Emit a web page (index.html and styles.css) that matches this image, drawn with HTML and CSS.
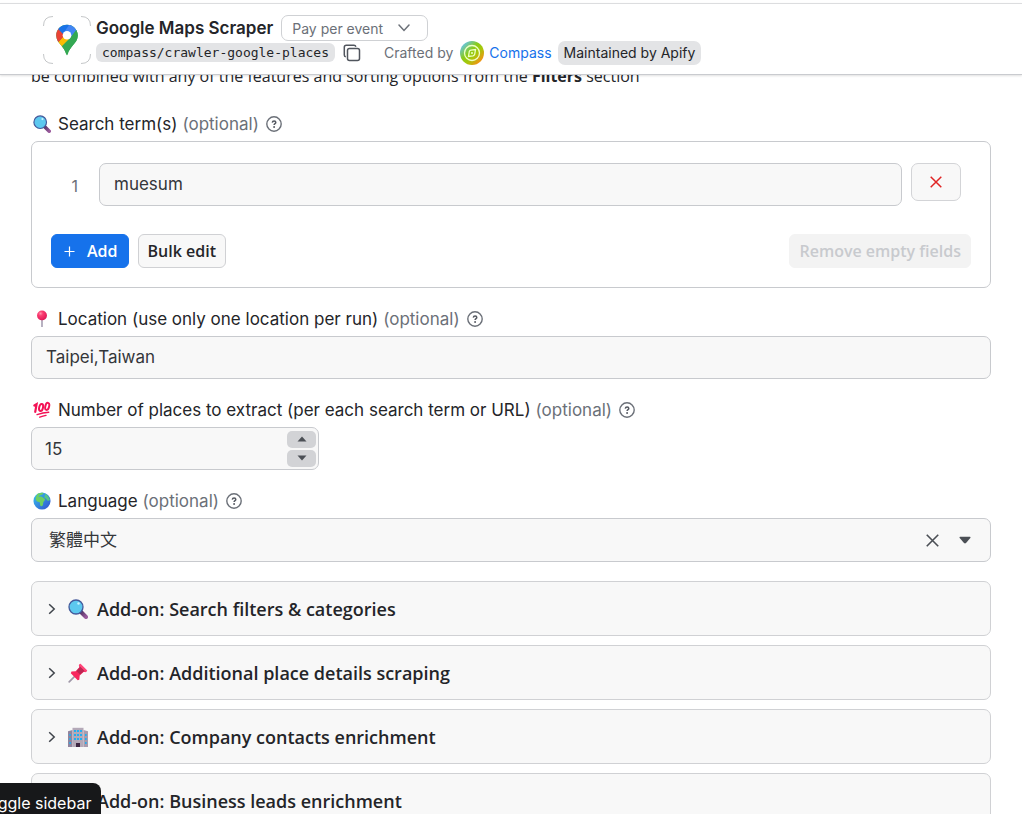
FILE: index.html
```html
<!DOCTYPE html>
<html lang="en">
<head>
<meta charset="utf-8">
<meta name="viewport" content="width=device-width, initial-scale=1">
<title>Google Maps Scraper</title>
<link rel="stylesheet" href="styles.css">
</head>
<body>
<svg class="sprite" aria-hidden="true">
  <defs>
    <linearGradient id="handle" x1="0" y1="0" x2="1" y2="1"><stop offset="0" stop-color="#533566"/><stop offset="1" stop-color="#9a5a9c"/></linearGradient>
    <linearGradient id="earth" x1="0" y1="0" x2="1" y2="1"><stop offset="0" stop-color="#35c4ee"/><stop offset="1" stop-color="#3450cf"/></linearGradient>
    <linearGradient id="brand" x1="0" y1="0" x2="1" y2="1"><stop offset="0.1" stop-color="#62c4f5"/><stop offset="0.42" stop-color="#8acb18"/><stop offset="0.6" stop-color="#a5c80a"/><stop offset="0.9" stop-color="#ff8a16"/></linearGradient>
    <radialGradient id="ball" cx="0.35" cy="0.3" r="0.7"><stop offset="0" stop-color="#ff8fab"/><stop offset="0.35" stop-color="#fb3c70"/><stop offset="1" stop-color="#e01a58"/></radialGradient>
  </defs>
  <symbol id="magnifier" viewBox="0 0 20 20">
    <path d="M13 13 18 18" stroke="url(#handle)" stroke-width="4" stroke-linecap="round"/>
    <circle cx="8" cy="8" r="7" fill="#5cc8ef" stroke="#44599b" stroke-width="1.3"/>
    <circle cx="10.5" cy="4.5" r="1.2" fill="#c5f3ff"/>
  </symbol>
  <symbol id="help" viewBox="0 0 16 16">
    <circle cx="8" cy="8" r="7.2" fill="none" stroke="#6b7078" stroke-width="1.4"/>
    <path d="M6.3 6.6C6.4 5.4 7.1 4.9 8.1 4.9S9.8 5.5 9.8 6.5C9.8 7.7 8.1 7.7 8.1 9" fill="none" stroke="#555961" stroke-width="1.5"/>
    <circle cx="8.1" cy="11" r="0.95" fill="#555961"/>
  </symbol>
  <symbol id="chevron" viewBox="0 0 8 12"><path d="M1.2 1.2 6.2 6 1.2 10.8" fill="none" stroke="#3f444b" stroke-width="1.5"/></symbol>
  <symbol id="cross" viewBox="0 0 12 12"><path d="M.7.7 11.3 11.3M11.3.7.7 11.3" fill="none" stroke="currentColor" stroke-width="1.5"/></symbol>
  <symbol id="pushpin" viewBox="0 0 20 20">
    <path d="M8 12 1.2 18.8" stroke="#9f98a8" stroke-width="1.7" stroke-linecap="round"/>
    <path d="M12.2.8 19.2 7.8 17.5 9.2 15.8 8.8 11.7 12.5 11.3 16.8 9.7 17.3 2.8 10.3 3.5 8.5 7.7 8.2 11.4 4.3 10.8 2.3Z" fill="#f8275f"/>
    <path d="M12.3 3.6 16.6 7.7 12 11.6 8.5 8.1Z" fill="#bd2653"/>
    <path d="M10.9 2.2 12.4.8 19.2 7.6 17.8 9.1Z" fill="#ff4679"/>
  </symbol>
  <symbol id="office" viewBox="0 0 20 20">
    <path d="M0 4.2 4.5 3V20H0Z" fill="#91859f"/><path d="M15.5 3 20 4.2V20H15.5Z" fill="#a99cad"/>
    <path d="M4.5.8H15.5V20H4.5Z" fill="#b4a9b8"/>
    <path d="M6 3h2v2H6zM9 3h2v2H9zM12 3h2v2H12zM6 7h2v2H6zM9 7h2v2H9zM12 7h2v2H12zM6 11h2v2H6zM9 11h2v2H9zM12 11h2v2H12zM1.3 7h1.6v2H1.3zM1.3 11h1.6v2H1.3zM1.3 15h1.6v2H1.3zM17 7h1.6v2H17zM17 11h1.6v2H17zM17 15h1.6v2H17z" fill="#22aef0"/>
    <path d="M8 16h4v4H8z" fill="#3d2742"/>
  </symbol>
</svg>

<header class="topbar">
  <svg class="logo" viewBox="0 0 48 48" aria-hidden="true">
    <path d="M.5 10Q.5.5 10 .5M38 .5Q47.500.5 47.500 10M47.500 38Q47.500 47.500 38 47.500M10 47.500Q.5 47.500.5 38" fill="none" stroke="#b5b7ba" stroke-width="0.8"/>
    <clipPath id="pin"><path d="M24 8.800C18.100 8.800 13.200 13.500 13.200 19.400 13.200 23.500 15.500 26.200 18.500 29.800 21 33 22.300 35.300 23.200 38.300Q24 40.200 24.800 38.300C25.700 35.300 27 33 29.500 29.800 32.500 26.200 34.800 23.500 34.800 19.400 34.800 13.500 29.900 8.800 24 8.800Z"/></clipPath>
    <g clip-path="url(#pin)">
      <path d="M10 5H38V42H10Z" fill="#34a853"/>
      <path d="M12 30 24 16 30 21 18.500 33 12 34Z" fill="#fbbc04"/>
      <path d="M10 8 24 17 13.500 28 10 29Z" fill="#ea4335"/>
      <path d="M14 12 16 5 30 8 20.500 18.500Z" fill="#1a73e8"/>
      <path d="M27.500 7 38 12 27 24 20.500 17Z" fill="#4285f4"/>
      <path d="M34 13 38 13 38 24 20 40 18 31 27 22Z" fill="#34a853"/>
    </g>
    <circle cx="24" cy="19.300" r="4.300" fill="#fff"/>
  </svg>
  <div class="heading">
    <div class="title-row">
      <h1 class="title">Google Maps Scraper</h1>
      <button class="pricing" type="button">Pay per event
        <svg width="12" height="8" viewBox="0 0 12 8" aria-hidden="true"><path d="M1 1 6 6.500 11 1" fill="none" stroke="#6b7078" stroke-width="1.500" stroke-linecap="round"/></svg>
      </button>
    </div>
    <div class="meta-row">
      <code class="slug">compass/crawler-google-places</code>
      <button class="copy" type="button" aria-label="Copy actor name">
        <svg width="18" height="18" viewBox="0 0 18 18" fill="none" stroke="#50555d" stroke-width="1.500" aria-hidden="true"><rect x="4.500" y="4.500" width="12" height="12" rx="2"/><path d="M2.800 12.800Q1.300 12.500 1.300 11V3.300Q1.300 1.300 3.300 1.300H11Q12.500 1.300 12.900 2.700"/></svg>
      </button>
      <span class="crafted">Crafted by</span>
      <svg class="avatar" viewBox="0 0 24 24" aria-hidden="true"><circle cx="12" cy="12" r="12" fill="url(#brand)"/><g fill="none" stroke="#efffc7"><circle cx="12" cy="12" r="7.500" stroke-width="1.300"/><path d="M8.500 15.500 9.300 10.500Q9.700 9.400 11 9.200L15.500 8.500 14.700 13.300Q14.300 14.500 13 14.800Z" stroke-width="1.300"/><circle cx="12" cy="12" r=".7"/></g></svg>
      <a class="author" href="#compass">Compass</a>
      <span class="badge">Maintained by Apify</span>
    </div>
  </div>
</header>

<main class="content">
  <p class="intro">be combined with any of the features and sorting options from the <strong>Filters</strong> section</p>

  <section class="field">
    <div class="label-row">
      <svg class="emoji" aria-hidden="true"><use href="#magnifier"/></svg>
      <label for="term">Search term(s)</label><span class="optional">(optional)</span>
      <button class="help" type="button" aria-label="About search terms"><svg width="16" height="16"><use href="#help"/></svg></button>
    </div>
    <div class="panel">
      <div class="term-row">
        <span class="index">1</span>
        <input class="box text" id="term" type="text" value="muesum">
        <button class="remove" type="button" aria-label="Remove term"><svg width="12" height="12"><use href="#cross"/></svg></button>
      </div>
      <div class="actions">
        <button class="btn primary" type="button"><svg width="11" height="11" viewBox="0 0 11 11" aria-hidden="true"><path d="M5.500.5V10.500M.5 5.500H10.500" stroke="#fff" stroke-width="1.200"/></svg>Add</button>
        <button class="btn" type="button">Bulk edit</button>
        <button class="btn clear-empty" type="button" disabled>Remove empty fields</button>
      </div>
    </div>
  </section>

  <section class="field">
    <div class="label-row">
      <svg class="emoji" viewBox="0 0 20 20" aria-hidden="true"><path d="M10 10V19" stroke="#958ca3" stroke-width="1.500"/><circle cx="10" cy="6" r="5.500" fill="url(#ball)"/></svg>
      <label for="location">Location (use only one location per run)</label><span class="optional">(optional)</span>
      <button class="help" type="button" aria-label="About location"><svg width="16" height="16"><use href="#help"/></svg></button>
    </div>
    <input class="box text" id="location" type="text" value="Taipei,Taiwan">
  </section>

  <section class="field">
    <div class="label-row">
      <svg class="emoji" viewBox="0 0 20 20" fill="none" stroke="#f31255" stroke-linecap="round" aria-hidden="true"><path d="M1.500 5 4 3.500 2.500 12" stroke-width="2.400"/><ellipse cx="9" cy="7.200" rx="2.100" ry="4" transform="rotate(14 9 7.200)" stroke-width="2.200"/><ellipse cx="15.800" cy="6" rx="2.100" ry="4" transform="rotate(14 15.800 6)" stroke-width="2.200"/><path d="M4.500 15.200Q11 13 17.500 12.500M7.500 18Q11 16.500 14.500 16" stroke-width="1.500"/></svg>
      <label for="count">Number of places to extract (per each search term or URL)</label><span class="optional">(optional)</span>
      <button class="help" type="button" aria-label="About number of places"><svg width="16" height="16"><use href="#help"/></svg></button>
    </div>
    <div class="box stepper">
      <input id="count" class="bare" type="number" value="15">
      <div class="steps">
        <button class="step" type="button" aria-label="Increase"><svg width="10" height="6" viewBox="0 0 10 6"><path d="M5 .5 9.500 5.500H.5Z" fill="#4b4f55"/></svg></button>
        <button class="step" type="button" aria-label="Decrease"><svg width="10" height="6" viewBox="0 0 10 6"><path d="M5 5.500 9.500.5H.5Z" fill="#4b4f55"/></svg></button>
      </div>
    </div>
  </section>

  <section class="field">
    <div class="label-row">
      <svg class="emoji" viewBox="0 0 20 20" aria-hidden="true"><circle cx="10" cy="10" r="9.500" fill="url(#earth)"/><path d="M5 2Q9 .5 12 1L10 3 7.500 3.500 6 5.500Q9 4.500 11 6L13.500 8Q13 10 11.500 11L11 14.500Q9.500 17 8 15L7.500 11.500Q4 11 3 8.500 3 5 5 2Z" fill="#6ecf62"/><path d="M14 2Q18 4.500 19 9L16.500 10 14.500 7.500 12.500 6 13 4Z" fill="#54c58a"/></svg>
      <label for="language">Language</label><span class="optional">(optional)</span>
      <button class="help" type="button" aria-label="About language"><svg width="16" height="16"><use href="#help"/></svg></button>
    </div>
    <div class="box picker">
      <select id="language" class="bare"><option lang="zh-Hant">繁體中文</option></select>
      <button class="icon-btn" type="button" aria-label="Clear language"><svg width="13" height="13"><use href="#cross"/></svg></button>
      <svg width="12" height="8" viewBox="0 0 12 8" aria-hidden="true"><path d="M1 .8H11Q12 1 11.300 2L7 7Q6 7.800 5 7L.7 2Q0 1 1 .8Z" fill="#4b4f55"/></svg>
    </div>
  </section>

  <div class="addons">
    <button class="addon" type="button"><svg class="caret" aria-hidden="true"><use href="#chevron"/></svg><svg class="addon-icon" aria-hidden="true"><use href="#magnifier"/></svg>Add-on: Search filters &amp; categories</button>
    <button class="addon" type="button"><svg class="caret" aria-hidden="true"><use href="#chevron"/></svg><svg class="addon-icon" aria-hidden="true"><use href="#pushpin"/></svg>Add-on: Additional place details scraping</button>
    <button class="addon" type="button"><svg class="caret" aria-hidden="true"><use href="#chevron"/></svg><svg class="addon-icon" aria-hidden="true"><use href="#office"/></svg>Add-on: Company contacts enrichment</button>
    <button class="addon" type="button"><svg class="caret" aria-hidden="true"><use href="#chevron"/></svg><svg class="addon-icon" aria-hidden="true"><use href="#office"/></svg>Add-on: Business leads enrichment</button>
  </div>
</main>

<div class="tooltip" role="tooltip">Toggle sidebar</div>
</body>
</html>
```
FILE: styles.css
```css
* { box-sizing: border-box; }

body {
  margin: 0;
  height: 100vh;
  overflow: hidden;
  display: flex;
  flex-direction: column;
  background: #fff;
  color: #242529;
  font-family: Inter, "Noto Sans CJK TC", sans-serif;
  font-size: 17px;
}

button, input, select { font: inherit; color: inherit; margin: 0; }
button { display: flex; align-items: center; justify-content: center; cursor: pointer; }
svg { flex: none; }
.sprite { position: absolute; width: 0; height: 0; }

/* Top bar */
.topbar {
  flex: none;
  display: flex;
  gap: 5px;
  margin-top: 3px;
  padding: 12px 43px 9px;
  border-top: 1px solid #dcdddf;
  border-bottom: 1px solid #c9cbcf;
  box-shadow: 0 1px 2px rgba(0, 0, 0, 0.12);
  background: #fff;
  z-index: 1;
}
.logo { width: 48px; height: 48px; }
.heading { display: flex; flex-direction: column; white-space: nowrap; }
.title-row { display: flex; align-items: center; gap: 8px; height: 24px; }
.title { margin: 0; font-size: 17px; font-weight: 600; line-height: 24px; }
.pricing {
  gap: 15px;
  height: 26px;
  padding: 0 17px 0 10px;
  border: 1px solid #cfd1d4;
  border-radius: 7px;
  background: #fff;
  color: #6b7078;
  font-size: 14px;
}
.meta-row { display: flex; align-items: center; height: 25px; font-size: 14px; }
.slug {
  padding: 0 6px;
  border-radius: 6px;
  background: #e3e4e6;
  font-family: "DejaVu Sans Mono", monospace;
  font-size: 13px;
  line-height: 19px;
}
.copy { margin: 0 23px 0 8px; padding: 0; border: 0; background: none; }
.crafted { color: #6b7078; }
.avatar { width: 24px; height: 24px; margin: 0 5px 0 7px; }
.author { margin-right: 6px; color: #1672eb; text-decoration: none; }
.badge { padding: 0 6px; border-radius: 7px; background: #e3e4e6; line-height: 24px; }

/* Form */
.content { flex: 1; min-height: 0; overflow: hidden; padding: 0 31px; }
.intro {
  margin: -11px 0 24px;
  font-family: "Open Sans", sans-serif;
  font-size: 16px;
  line-height: 24px;
}
.field { margin-bottom: 19px; }
.label-row { display: flex; align-items: center; height: 24px; margin-bottom: 5px; padding-left: 2px; white-space: nowrap; }
.emoji { width: 18px; height: 18px; margin-right: 7px; }
.optional { margin-left: 5px; color: #6b7078; }
.help { margin-left: 7px; padding: 0; border: 0; background: none; }

.box {
  width: 100%;
  height: 43px;
  border: 1px solid #c8cace;
  border-radius: 7px;
  background: #f8f8f8;
  color: #34363a;
}
.text { padding: 0 14px 1px; }
.bare { flex: 1; min-width: 0; padding: 0; border: 0; background: none; appearance: none; outline: 0; }
.panel { padding: 21px 19px 19px; border: 1px solid #c8cace; border-radius: 7px; }
.term-row { display: flex; align-items: flex-start; gap: 9px; margin-bottom: 28px; padding-right: 10px; }
.index { width: 39px; padding: 4px 12px 0 0; color: #6b7078; font-size: 16px; line-height: 39px; text-align: right; }
.term-row .box { flex: 1; }
.remove { width: 50px; height: 38px; border: 1px solid #d3d4d7; border-radius: 7px; background: #f8f8f8; color: #e02424; }
.actions { display: flex; gap: 9px; }
.btn {
  gap: 12px;
  height: 34px;
  padding: 0 9px;
  border: 1px solid #d0d1d4;
  border-radius: 6px;
  background: #f8f8f8;
  font-family: "Open Sans", sans-serif;
  font-size: 16px;
  font-weight: 600;
}
.primary { padding: 0 10px 0 12px; border-color: #1672eb; background: #1672eb; color: #fff; }
.clear-empty { margin-left: auto; border-color: #f3f3f3; background: #f3f3f3; color: #c8cace; }

.stepper { display: flex; align-items: center; max-width: 288px; padding: 0 2px 0 13px; }
.stepper .bare { appearance: textfield; }
.bare::-webkit-inner-spin-button { appearance: none; }
.steps { display: flex; flex-direction: column; gap: 2px; }
.step { width: 29px; height: 17px; padding: 0; border: 0; border-radius: 5px; background: #d2d3d6; }

.picker { display: flex; align-items: center; height: 44px; padding: 0 19px 0 17px; }
.picker .bare { padding-bottom: 3px; font-family: "Noto Sans CJK TC", sans-serif; }
.icon-btn { margin-right: 20px; padding: 0; border: 0; background: none; color: #4b4f55; }

/* Add-on sections */
.addons { display: flex; flex-direction: column; gap: 9px; }
.addon {
  flex: none;
  justify-content: flex-start;
  height: 55px;
  padding: 0 16px;
  border: 1px solid #d0d1d4;
  border-radius: 7px;
  background: #f8f8f8;
  font-family: "Open Sans", sans-serif;
  font-size: 18px;
  font-weight: 600;
}
.caret { width: 8px; height: 12px; margin-right: 12px; }
.addon-icon { width: 20px; height: 20px; margin-right: 9px; }

.tooltip {
  position: absolute;
  left: -31px;
  bottom: -10px;
  z-index: 2;
  padding: 8px 10px;
  border-radius: 8px;
  background: #17181a;
  color: #fff;
  font-size: 16px;
  line-height: 25px;
}
```
